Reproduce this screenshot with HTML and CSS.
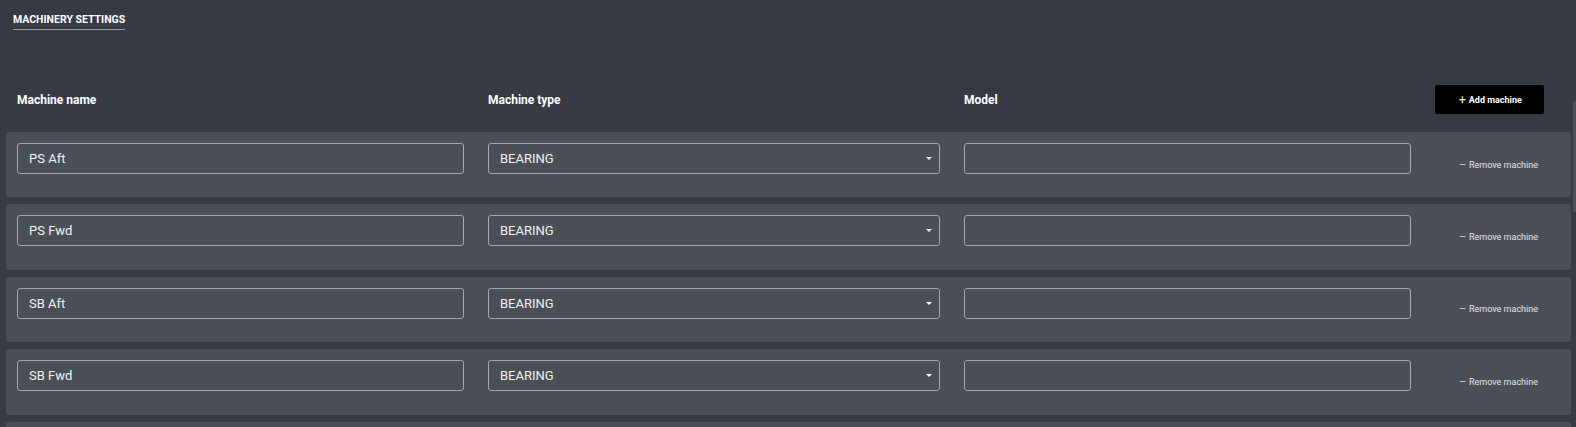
FILE: index.html
```html
<!DOCTYPE html>
<html lang="en">
  <head>
    <meta charset="UTF-8" />
    <meta name="viewport" content="width=device-width, initial-scale=1.0" />
    <title>Machinery settings</title>
    <link rel="stylesheet" href="styles.css">
  </head>
  <body>
    <div class="page">
      <h2 class="title"><span>MACHINERY SETTINGS</span></h2>

      <div class="row head">
        <div class="label">Machine name</div>
        <div class="label">Machine type</div>
        <div class="label">Model</div>
        <div class="action">
          <button class="btn add"><span class="sign">+</span> Add machine</button>
        </div>
      </div>

      <div class="list">
        <div class="row card">
          <input class="field" type="text" value="PS Aft" />
          <div class="select"><span>BEARING</span></div>
          <input class="field" type="text" value="" />
          <div class="action">
            <button class="btn remove"><span class="sign">—</span> Remove machine</button>
          </div>
        </div>
        <div class="row card">
          <input class="field" type="text" value="PS Fwd" />
          <div class="select"><span>BEARING</span></div>
          <input class="field" type="text" value="" />
          <div class="action">
            <button class="btn remove"><span class="sign">—</span> Remove machine</button>
          </div>
        </div>
        <div class="row card">
          <input class="field" type="text" value="SB Aft" />
          <div class="select"><span>BEARING</span></div>
          <input class="field" type="text" value="" />
          <div class="action">
            <button class="btn remove"><span class="sign">—</span> Remove machine</button>
          </div>
        </div>
        <div class="row card">
          <input class="field" type="text" value="SB Fwd" />
          <div class="select"><span>BEARING</span></div>
          <input class="field" type="text" value="" />
          <div class="action">
            <button class="btn remove"><span class="sign">—</span> Remove machine</button>
          </div>
        </div>
        <div class="row card">
          <input class="field" type="text" value="Gearbox" />
          <div class="select"><span>GEARBOX</span></div>
          <input class="field" type="text" value="" />
          <div class="action">
            <button class="btn remove"><span class="sign">—</span> Remove machine</button>
          </div>
        </div>
      </div>

      <div class="thumb"></div>
    </div>
  </body>
</html>
```

FILE: styles.css
```css
* {
  margin: 0;
  padding: 0;
  box-sizing: border-box;
}
html,
body {
  height: 100%;
  overflow: hidden;
}
body {
  background-color: #363a42;
  color: #fff;
  font-family: Roboto, "Noto Sans", sans-serif;
}
.page {
  position: relative;
  height: 100%;
  padding: 14px 5px 0 6px;
}

/* title */
.title {
  padding-left: 7px;
  font-size: 10.5px;
  line-height: 12px;
  font-weight: 700;
}
.title span {
  display: inline-block;
  padding-bottom: 3px;
  border-bottom: 1px solid #9a9ea4;
}

/* rows */
.row {
  display: grid;
  grid-template-columns: 447px 452px 447px 1fr;
  column-gap: 24px;
  padding: 0 11px;
}
.head {
  margin-top: 55px;
  align-items: center;
  height: 29px;
}
.label {
  font-size: 12px;
  font-weight: 700;
}
.list {
  margin-top: 18px;
  display: flex;
  flex-direction: column;
  gap: 7px;
}
.card {
  height: 65.4px;
  padding-top: 11px;
  align-items: start;
  background-color: #4a4f56;
  border-radius: 3px;
}

/* inputs */
.field,
.select {
  height: 31px;
  width: 100%;
  border: 1px solid #a5a9ae;
  border-radius: 3px;
  background: transparent;
  color: #f1f2f3;
  font-family: inherit;
  font-size: 13px;
  padding: 0 11px;
  outline: none;
}
.select {
  position: relative;
  display: flex;
  align-items: center;
}
.select::after {
  content: "";
  position: absolute;
  right: 7px;
  top: 13px;
  border-left: 3px solid transparent;
  border-right: 3px solid transparent;
  border-top: 3px solid #fff;
}

/* buttons */
.btn {
  width: 109px;
  height: 29px;
  padding-left: 24px;
  border: none;
  border-radius: 2px;
  font-family: inherit;
  font-size: 9px;
  display: flex;
  align-items: center;
  cursor: pointer;
}
.btn .sign {
  margin-right: 3px;
  font-weight: 400;
}
.add {
  background-color: #000;
  color: #fff;
  font-weight: 700;
}
.add .sign {
  font-size: 12px;
}
.remove {
  margin-top: 7px;
  background: transparent;
  color: #e4e6e8;
}

/* scroll bar */
.thumb {
  position: absolute;
  right: 0;
  top: 101px;
  width: 3px;
  height: 111px;
  background-color: #4d5159;
}
```
